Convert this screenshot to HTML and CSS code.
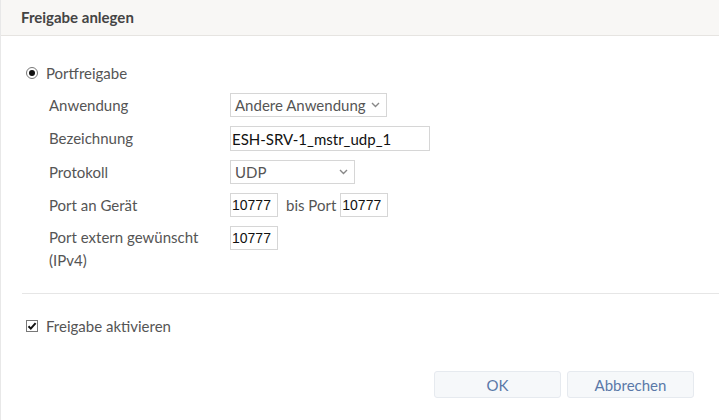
FILE: index.html
```html
<!DOCTYPE html>
<html lang="de">
<head>
<meta charset="utf-8">
<link rel="stylesheet" href="styles.css">
</head>
<body>
<div class="dialog">
  <div class="header">Freigabe anlegen</div>
  <div class="content">
    <label class="radio-row"><span class="radio"></span><span>Portfreigabe</span></label>
    <div class="form">
      <div class="row">
        <div class="label">Anwendung</div>
        <div class="ctrl"><div class="select w156"><span>Andere Anwendung</span><svg width="9" height="6" viewBox="0 0 9 6"><path d="M1 1l3.5 3.5L8 1" fill="none" stroke="#888" stroke-width="1.4"/></svg></div></div>
      </div>
      <div class="row">
        <div class="label">Bezeichnung</div>
        <div class="ctrl"><div class="input w199 dark">ESH-SRV-1_mstr_udp_1</div></div>
      </div>
      <div class="row">
        <div class="label">Protokoll</div>
        <div class="ctrl"><div class="select w124"><span>UDP</span><svg width="9" height="6" viewBox="0 0 9 6"><path d="M1 1l3.5 3.5L8 1" fill="none" stroke="#888" stroke-width="1.4"/></svg></div></div>
      </div>
      <div class="row">
        <div class="label">Port an Gerät</div>
        <div class="ctrl"><div class="input num">10777</div><span class="bis">bis Port</span><div class="input num">10777</div></div>
      </div>
      <div class="row">
        <div class="label two">Port extern gewünscht<br>(IPv4)</div>
        <div class="ctrl"><div class="input num">10777</div></div>
      </div>
    </div>
    <div class="sep"></div>
    <label class="check-row"><span class="checkbox"><svg width="10" height="10" viewBox="0 0 10 10"><path d="M1.5 5.2l2.3 2.4L8.6 2.2" fill="none" stroke="#111" stroke-width="2"/></svg></span><span>Freigabe aktivieren</span></label>
    <div class="buttons">
      <button class="btn">OK</button>
      <button class="btn">Abbrechen</button>
    </div>
  </div>
</div>
</body>
</html>
```
FILE: styles.css
```css
html, body {
  margin: 0;
  padding: 0;
  background: #fff;
}
body {
  font-family: "Source Sans Pro", Lato, "Noto Sans", sans-serif;
  font-size: 15px;
  color: #555;
}
.dialog {
  width: 719px;
  height: 420px;
  border-left: 1px solid #e8e8e8;
  box-sizing: border-box;
}
.header {
  height: 36px;
  box-sizing: border-box;
  background: #f8f7f5;
  border-bottom: 1px solid #e6e4e1;
  padding-left: 20px;
  line-height: 35px;
  font-weight: bold;
  color: #444;
}
.content {
  padding-top: 25px;
}
.radio-row, .check-row {
  display: flex;
  align-items: center;
  height: 24px;
  padding-left: 25px;
}
.radio {
  width: 12px;
  height: 12px;
  box-sizing: border-box;
  border: 1px solid #777;
  border-radius: 50%;
  margin-right: 8px;
  display: flex;
  align-items: center;
  justify-content: center;
  background: #fff;
}
.radio::after {
  content: "";
  width: 6px;
  height: 6px;
  border-radius: 50%;
  background: #111;
}
.checkbox {
  width: 12px;
  height: 12px;
  box-sizing: border-box;
  border: 1px solid #777;
  margin-right: 8px;
  display: flex;
  align-items: center;
  justify-content: center;
  background: #fff;
}
.form {
  margin-top: 8px;
  padding-left: 48px;
}
.row {
  display: grid;
  grid-template-columns: 181px 1fr;
  margin-bottom: 9px;
}
.label {
  line-height: 24px;
}
.label.two {
  line-height: 23px;
}
.ctrl {
  display: flex;
  align-items: flex-start;
}
.select, .input {
  height: 24px;
  box-sizing: border-box;
  border: 1px solid #d6d6d6;
  background: #fff;
  display: flex;
  align-items: center;
  padding: 0 4px;
}
.select {
  justify-content: space-between;
  padding-right: 6px;
  color: #555;
}
.input.dark {
  color: #111;
  height: 25px;
  padding-left: 1px;
}
.input.num {
  width: 48px;
  padding-left: 1px;
  color: #111;
  font-family: "Liberation Sans", Arial, sans-serif;
  font-size: 14px;
}
.w156 { width: 157px; }
.w199 { width: 200px; }
.w124 { width: 125px; }
.bis {
  line-height: 24px;
  margin: 0 4px 0 8px;
}
.sep {
  height: 1px;
  background: #e6e6e6;
  margin: 21px 0 20px 21px;
}
.buttons {
  display: flex;
  justify-content: flex-end;
  gap: 6px;
  padding-right: 25px;
  margin-top: 33px;
}
.btn {
  width: 127px;
  height: 27px;
  border: 1px solid #e6eaef;
  border-radius: 3px;
  background: #f6f8fa;
  color: #5a78a8;
  font-family: inherit;
  font-size: 15px;
}
```
